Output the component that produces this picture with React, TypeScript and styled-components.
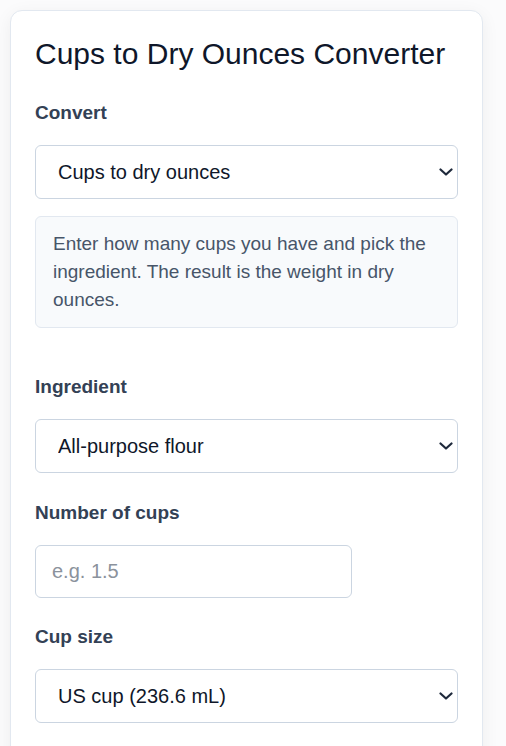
import React, { useState } from 'react';
import styled, { createGlobalStyle } from 'styled-components';

const GlobalStyle = createGlobalStyle`
  html, body {
    margin: 0;
    padding: 0;
    background: #fbfbfc;
  }
  body {
    font-family: "Liberation Sans", Arial, sans-serif;
    color: #0f172a;
  }
  * {
    box-sizing: border-box;
  }
`;

const Page = styled.div`
  padding: 10px 23px 10px 10px;
`;

const Card = styled.div`
  background: #ffffff;
  border: 1px solid #e2e8f0;
  border-radius: 12px;
  box-shadow: 0 4px 18px rgba(15, 23, 42, 0.06);
  padding: 25px 24px 40px;
`;

const Title = styled.h1`
  margin: 0 0 30px;
  font-size: 30px;
  font-weight: 400;
  line-height: 36px;
  color: #0f172a;
`;

const Field = styled.div<{ $space?: number }>`
  display: flex;
  flex-direction: column;
  align-items: flex-start;
  margin-bottom: ${(p) => p.$space ?? 28.5}px;
`;

const Label = styled.label`
  display: block;
  font-size: 19px;
  font-weight: 700;
  line-height: 22px;
  color: #334155;
  margin-bottom: 21px;
`;

const SelectWrap = styled.div`
  position: relative;
  width: 100%;
`;

const Select = styled.select`
  display: block;
  width: 100%;
  height: 54px;
  padding: 0 30px 0 22px;
  appearance: none;
  font-family: inherit;
  font-size: 20px;
  color: #0f172a;
  background: #ffffff;
  border: 1px solid #cbd5e1;
  border-radius: 6px;
`;

const Chevron = styled.svg`
  position: absolute;
  right: 5px;
  top: 50%;
  width: 14px;
  height: 8px;
  margin-top: -4px;
  pointer-events: none;
  color: #1e293b;
`;

const NumberInput = styled.input`
  width: 317px;
  height: 53px;
  padding: 0 16px;
  font-family: inherit;
  font-size: 20px;
  color: #0f172a;
  background: #ffffff;
  border: 1px solid #cbd5e1;
  border-radius: 6px;

  &::placeholder {
    color: #8b929c;
  }
`;

const Hint = styled.p`
  width: 100%;
  margin: 17px 0 0;
  padding: 13px 17px;
  font-size: 19px;
  line-height: 28px;
  color: #475569;
  background: #f8fafc;
  border: 1px solid #e2e8f0;
  border-radius: 6px;
`;

const ingredients = [
  'All-purpose flour',
  'Granulated sugar',
  'Brown sugar',
  'Rolled oats',
  'Rice',
];

const cupSizes = ['US cup (236.6 mL)', 'Metric cup (250 mL)', 'Imperial cup (284.1 mL)'];

function Dropdown(props: React.SelectHTMLAttributes<HTMLSelectElement>) {
  return (
    <SelectWrap>
      <Select {...props} />
      <Chevron viewBox="0 0 14 8" fill="none">
        <polyline
          points="1.5,1.5 7,6.5 12.5,1.5"
          stroke="currentColor"
          strokeWidth="2.2"
          strokeLinecap="round"
          strokeLinejoin="round"
        />
      </Chevron>
    </SelectWrap>
  );
}

function App() {
  const [mode, setMode] = useState('cups-to-oz');
  const [ingredient, setIngredient] = useState(ingredients[0]);
  const [cups, setCups] = useState('');
  const [cupSize, setCupSize] = useState(cupSizes[0]);

  return (
    <Page>
      <GlobalStyle />
      <Card>
        <Title>Cups to Dry Ounces Converter</Title>

        <Field $space={48}>
          <Label htmlFor="mode">Convert</Label>
          <Dropdown id="mode" value={mode} onChange={(e) => setMode(e.target.value)}>
            <option value="cups-to-oz">Cups to dry ounces</option>
            <option value="oz-to-cups">Dry ounces to cups</option>
          </Dropdown>
          <Hint>
            Enter how many cups you have and pick the ingredient. The result is the
            weight in dry ounces.
          </Hint>
        </Field>

        <Field>
          <Label htmlFor="ingredient">Ingredient</Label>
          <Dropdown
            id="ingredient"
            value={ingredient}
            onChange={(e) => setIngredient(e.target.value)}
          >
            {ingredients.map((name) => (
              <option key={name}>{name}</option>
            ))}
          </Dropdown>
        </Field>

        <Field>
          <Label htmlFor="cups">Number of cups</Label>
          <NumberInput
            id="cups"
            type="number"
            placeholder="e.g. 1.5"
            value={cups}
            onChange={(e) => setCups(e.target.value)}
          />
        </Field>

        <Field>
          <Label htmlFor="cup-size">Cup size</Label>
          <Dropdown id="cup-size" value={cupSize} onChange={(e) => setCupSize(e.target.value)}>
            {cupSizes.map((size) => (
              <option key={size}>{size}</option>
            ))}
          </Dropdown>
        </Field>
      </Card>
    </Page>
  );
}

export default App;
